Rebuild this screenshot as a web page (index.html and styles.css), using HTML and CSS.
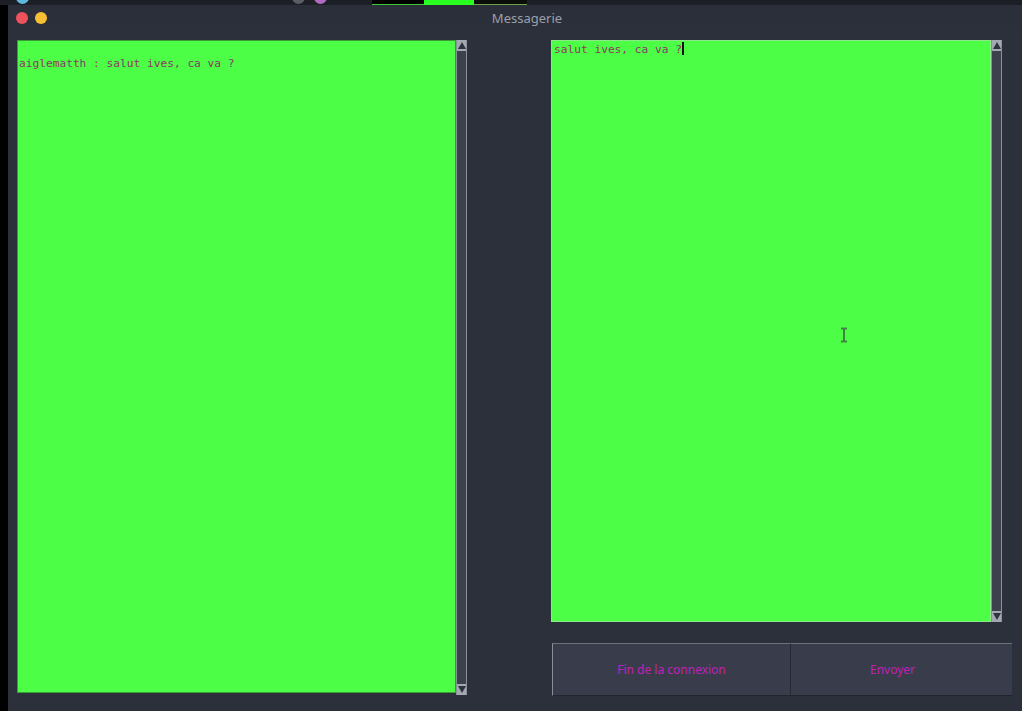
FILE: index.html
```html
<!DOCTYPE html>
<html lang="fr">
<head>
<meta charset="utf-8">
<title>Messagerie</title>
<link rel="stylesheet" href="styles.css">
</head>
<body>
<div class="topstrip">
  <span class="dot dot-blue"></span>
  <span class="dot dot-gray"></span>
  <span class="dot dot-purple"></span>
  <span class="blk blk-dark"></span>
  <span class="blk blk-green"></span>
  <span class="blk blk-dark2"></span>
</div>
<div class="desk">
  <div class="window">
    <div class="titlebar">
      <div class="lights">
        <span class="light red"></span>
        <span class="light yellow"></span>
      </div>
      <div class="title">Messagerie</div>
    </div>
    <div class="content">
      <div class="pane left-pane">
        <div class="textarea left-text">
          <div class="line">aiglematth : salut ives, ca va ?</div>
        </div>
        <div class="scrollbar">
          <div class="arrow up"></div>
          <div class="track"></div>
          <div class="arrow down"></div>
        </div>
      </div>
      <div class="right-col">
        <div class="pane right-pane">
          <div class="textarea right-text">
            <div class="line">salut ives, ca va ?<span class="caret"></span></div>
            <svg class="ibeam" width="8" height="16" viewBox="0 0 8 16">
              <path d="M1 1.5h6M1 14.5h6M4 1.5v13" stroke="#0c3a12" stroke-width="1.4" fill="none"/>
              <path d="M1 1.5h6M1 14.5h6M4 1.5v13" stroke="#e8ffe8" stroke-width="0.5" fill="none" opacity="0.6"/>
            </svg>
          </div>
          <div class="scrollbar">
            <div class="arrow up"></div>
            <div class="track"></div>
            <div class="arrow down"></div>
          </div>
        </div>
        <div class="buttons">
          <button class="btn btn-quit">Fin de la connexion</button>
          <button class="btn btn-send">Envoyer</button>
        </div>
      </div>
    </div>
  </div>
</div>
</body>
</html>
```
FILE: styles.css
```css
* { box-sizing: border-box; }
html, body {
  margin: 0;
  padding: 0;
  width: 1022px;
  height: 711px;
  overflow: hidden;
  background: #1d2026;
}
.topstrip {
  height: 5px;
  display: flex;
  align-items: flex-end;
  background: #1c1f25;
  overflow: hidden;
}
.dot {
  display: block;
  width: 13px;
  height: 13px;
  border-radius: 50%;
  margin-bottom: 1px;
}
.dot-blue { background: #5fb7e0; margin-left: 16px; }
.dot-gray { background: #5a5d63; margin-left: 263px; }
.dot-purple { background: #b06ac0; margin-left: 9px; }
.blk { display: block; height: 5px; }
.blk-dark { width: 52px; margin-left: 45px; background: #000; border-bottom: 1px solid #39c733; }
.blk-green { width: 50px; background: #2aff22; }
.blk-dark2 { width: 53px; background: #0b0d0b; border-bottom: 1px solid #6fa04a; }

.desk {
  display: flex;
  height: 706px;
  background: #000;
}
.window {
  margin-left: 8px;
  flex: 1;
  background: #2b303b;
  display: flex;
  flex-direction: column;
}
.titlebar {
  height: 25px;
  position: relative;
  display: flex;
  align-items: center;
  background: #2b2f39;
}
.lights {
  display: flex;
  gap: 7px;
  padding-left: 8px;
}
.light {
  width: 12px;
  height: 12px;
  border-radius: 50%;
  display: block;
}
.light.red { background: #f0525d; }
.light.yellow { background: #f7bf32; }
.title {
  position: absolute;
  left: 0;
  right: 0;
  top: 0;
  height: 25px;
  line-height: 26px;
  text-align: center;
  font-family: "Noto Sans", "DejaVu Sans", sans-serif;
  font-size: 13px;
  color: #9aa0ab;
  padding-left: 24px;
}
.content {
  flex: 1;
  display: flex;
  padding: 10px 10px 0 9px;
  gap: 84px;
}
.pane {
  display: flex;
}
.left-pane {
  width: 450px;
  height: 655px;
}
.textarea {
  background: #4cfe46;
  border: 1px solid #7ee07a;
  position: relative;
  font-family: "DejaVu Sans Mono", monospace;
  font-size: 11.2px;
  color: #8a3a64;
}
.left-text {
  width: 439px;
  height: 653px;
  padding: 16px 0 0 1px;
  border-color: #3a9c35;
}
.line { white-space: pre; line-height: 14px; }
.scrollbar {
  width: 11px;
  display: flex;
  flex-direction: column;
  background: #3c414d;
  border-left: 1px solid #8b909a;
  border-right: 1px solid #8b909a;
}
.arrow {
  height: 11px;
  background: #a4a8b0;
  position: relative;
}
.arrow::after {
  content: "";
  position: absolute;
  left: 1px;
  border-left: 4px solid transparent;
  border-right: 4px solid transparent;
}
.arrow.up::after {
  top: 2px;
  border-bottom: 7px solid #2e3340;
}
.arrow.down::after {
  top: 2px;
  border-top: 7px solid #2e3340;
}
.track {
  flex: 1;
}
.right-col {
  display: flex;
  flex-direction: column;
  width: 461px;
}
.right-pane {
  height: 582px;
}
.right-text {
  width: 440px;
  height: 582px;
  padding: 1px 0 0 2px;
  border-color: #8ee88a;
}
.caret {
  display: inline-block;
  width: 2px;
  height: 13px;
  background: #111;
  vertical-align: -2px;
  margin-left: 0;
}
.ibeam {
  position: absolute;
  left: 288px;
  top: 286px;
}
.buttons {
  margin-top: 21px;
  margin-left: 1px;
  display: flex;
  height: 53px;
  width: 460px;
}
.btn {
  flex: 0 0 auto;
  height: 53px;
  background: #393d4b;
  border: none;
  border-top: 1px solid #6c717e;
  border-left: 1px solid #8a8e98;
  border-bottom: 1px solid #22252c;
  font-family: "Noto Sans", "DejaVu Sans", sans-serif;
  font-size: 12px;
  color: #c020b8;
  padding: 0;
  margin: 0;
}
.btn-quit { width: 239px; border-right: 1px solid #262932; }
.btn-send { width: 221px; border-left: none; padding-right: 18px; }
```
